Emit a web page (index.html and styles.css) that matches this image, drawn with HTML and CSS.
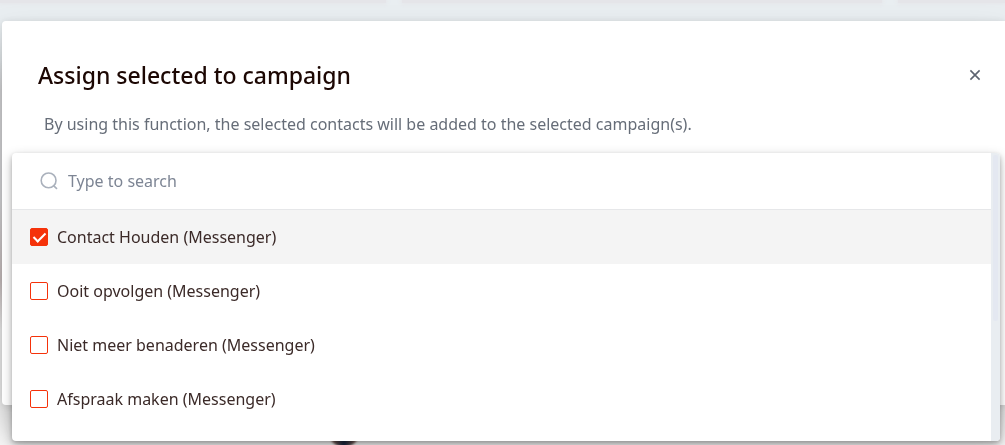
FILE: index.html
```html
<!DOCTYPE html>
<html lang="en">
<head>
    <meta charset="utf-8">
    <title>Assign selected to campaign</title>
    <link rel="stylesheet" href="styles.css">
</head>
<body>
    <div class="backdrop">
        <div class="cards">
            <div class="card"></div>
            <div class="card"></div>
            <div class="card"></div>
        </div>
        <div class="avatar"></div>
    </div>

    <div class="modal" role="dialog" aria-labelledby="modal-title">
        <div class="modal-header">
            <h1 class="modal-title" id="modal-title">Assign selected to campaign</h1>
            <button class="close" type="button" aria-label="Close">
                <svg width="12" height="12" viewBox="0 0 12 12" fill="none" stroke="currentColor" stroke-width="1.6">
                    <path d="M1.4 1.4l9.2 9.2M10.6 1.4l-9.2 9.2"/>
                </svg>
            </button>
        </div>
        <p class="modal-text">By using this function, the selected contacts will be added to the selected campaign(s).</p>

        <div class="select">
            <div class="dropdown">
                <div class="panel">
                    <div class="search">
                        <svg width="18" height="18" viewBox="0 0 18 18" fill="none" stroke="#aab1bc" stroke-width="1.6">
                            <circle cx="8.6" cy="8.4" r="7.4"/>
                            <path d="M13.8 13.8l3.2 3"/>
                        </svg>
                        <input class="search-input" type="text" placeholder="Type to search" aria-label="Type to search">
                    </div>
                    <label class="option active">
                        <input class="check" type="checkbox" checked>
                        <span>Contact Houden (Messenger)</span>
                    </label>
                    <label class="option">
                        <input class="check" type="checkbox">
                        <span>Ooit opvolgen (Messenger)</span>
                    </label>
                    <label class="option">
                        <input class="check" type="checkbox">
                        <span>Niet meer benaderen (Messenger)</span>
                    </label>
                    <label class="option">
                        <input class="check" type="checkbox">
                        <span>Afspraak maken (Messenger)</span>
                    </label>
                </div>
                <div class="scrollbar">
                    <div class="thumb"></div>
                </div>
            </div>
        </div>
    </div>
</body>
</html>
```

FILE: styles.css
```css
* {
    box-sizing: border-box;
    margin: 0;
    padding: 0;
}

body {
    min-height: 100vh;
    overflow: hidden;
    background-color: #f5f5f5;
    font-family: "Noto Sans", sans-serif;
    font-size: 16px;
    line-height: 20px;
    color: #3b2a28;
}

/* page behind the dialog */
.backdrop {
    position: fixed;
    inset: 0;
    background: linear-gradient(#e9eef1 60px, #dedee0 90px, #dedee0 200px, #d0c6c6 280px, #f8f8f8 330px);
}

.cards {
    display: grid;
    grid-template-columns: 386px 480px 1fr;
    gap: 16px;
}

.card {
    height: 3px;
    background-color: #e5e5e9;
    box-shadow: 0 0 4px 1px #e5e5e9;
}

.avatar {
    position: absolute;
    bottom: -2px;
    left: 329px;
    width: 30px;
    height: 28px;
    border-radius: 50%;
    background: linear-gradient(90deg, #9a6c54, #14233f 50%, #9a6c54);
    filter: blur(1px);
}

.modal {
    position: relative;
    margin: 21px 0 0 2px;
    padding: 36px 18px 0 10px;
    border-radius: 4px 0 0 4px;
    background-color: #fff;
    box-shadow: 0 1px 8px rgba(0, 0, 0, 0.12), 0 24px 38px rgba(0, 0, 0, 0.26);
}

.modal-header {
    display: flex;
    align-items: center;
    justify-content: space-between;
    padding-left: 26px;
}

.modal-title {
    font-size: 23px;
    font-weight: 500;
    line-height: 36px;
    color: #1c0703;
}

.close {
    display: flex;
    align-items: center;
    justify-content: center;
    width: 24px;
    height: 24px;
    border: 0;
    background: none;
    color: #5c6370;
    cursor: pointer;
}

.modal-text {
    margin-top: 21px;
    padding-left: 32px;
    color: #666d78;
}

.select {
    min-height: 271px;
}

.dropdown {
    position: absolute;
    top: 132px;
    left: 10px;
    right: 5px;
    display: flex;
    overflow: hidden;
    border-radius: 4px;
    background-color: #fff;
    box-shadow: 0 2px 4px rgba(0, 0, 0, 0.2), 0 4px 12px rgba(0, 0, 0, 0.26);
}

.panel {
    flex: 1;
    padding-bottom: 15px;
}

.search {
    display: flex;
    align-items: center;
    gap: 10px;
    height: 57px;
    padding: 0 28px;
    border-bottom: 1px solid #e6e7e9;
}

.search-input {
    flex: 1;
    border: 0;
    outline: 0;
    background: none;
    font: inherit;
    color: #3b2a28;
}

.search-input::placeholder {
    color: #7d8594;
    opacity: 1;
}

.option {
    display: flex;
    align-items: center;
    gap: 9px;
    height: 54px;
    padding: 0 18px;
    cursor: pointer;
}

.option.active {
    background-color: #f4f4f4;
}

.check {
    appearance: none;
    display: flex;
    align-items: center;
    justify-content: center;
    width: 18px;
    height: 18px;
    border: 1px solid #f5320a;
    border-radius: 2px;
    background-color: #fff;
}

.check:checked {
    background-color: #f5320a;
}

.check:checked::after {
    content: "";
    width: 5px;
    height: 10px;
    margin-bottom: 3px;
    border: solid #fff;
    border-width: 0 2px 2px 0;
    transform: rotate(45deg);
}

.scrollbar {
    width: 9px;
    padding: 2px;
    background-color: #e9edf1;
}

.thumb {
    height: 166px;
    border-radius: 2px;
    background-color: #e4e8f1;
}
```
